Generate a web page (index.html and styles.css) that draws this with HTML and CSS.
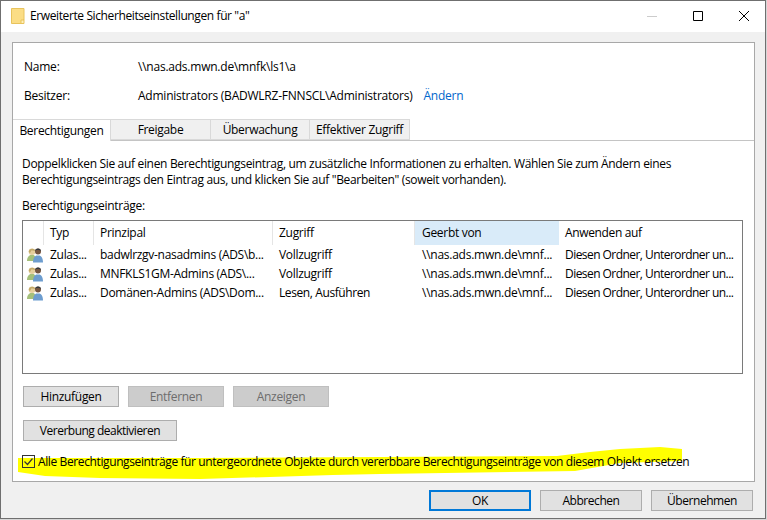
FILE: index.html
```html
<!DOCTYPE html>
<html lang="de">
<head>
<meta charset="utf-8">
<title>Erweiterte Sicherheitseinstellungen für "a"</title>
<link rel="stylesheet" href="styles.css">
</head>
<body>
<div class="window">
  <div class="titlebar">
    <svg class="folder" width="14" height="16" viewBox="0 0 14 16"><path d="M.5.5h12.500v11.500h-1v3.500H.5z" fill="#fbdd85" stroke="#e8c35c"/><path d="M10 12h3v3.500h-3z" fill="#fff0b8" stroke="#e8c35c"/></svg>
    <span class="title">Erweiterte Sicherheitseinstellungen für "a"</span>
    <div class="controls">
      <span class="ctl"><svg width="10" height="10" viewBox="0 0 10 10"><path d="M0 5.500h10" stroke="#ccc"/></svg></span>
      <span class="ctl"><svg width="10" height="10" viewBox="0 0 10 10"><path d="M.5.5h9v9h-9z" fill="none" stroke="#000"/></svg></span>
      <span class="ctl"><svg width="10" height="10" viewBox="0 0 10 10"><path d="M0 0l10 10M10 0L0 10" stroke="#000"/></svg></span>
    </div>
  </div>
  <div class="content">
    <div class="panel">
      <div class="info">
        <div class="info-row"><span class="info-label">Name:</span><span>\\nas.ads.mwn.de\mnfk\ls1\a</span></div>
        <div class="info-row"><span class="info-label">Besitzer:</span><span>Administrators (BADWLRZ-FNNSCL\Administrators)</span><a class="link">Ändern</a></div>
      </div>
      <div class="tabs">
        <div class="tab tab-active">Berechtigungen</div>
        <div class="tab tab-2">Freigabe</div>
        <div class="tab tab-3">Überwachung</div>
        <div class="tab tab-4">Effektiver Zugriff</div>
      </div>
      <div class="page">
        <p class="desc">Doppelklicken Sie auf einen Berechtigungseintrag, um zusätzliche Informationen zu erhalten. Wählen Sie zum Ändern eines<br>Berechtigungseintrags den Eintrag aus, und klicken Sie auf "Bearbeiten" (soweit vorhanden).</p>
        <div class="list-label">Berechtigungseinträge:</div>
        <div class="list">
          <div class="grid head">
            <div class="hc"></div>
            <div class="hc">Typ</div>
            <div class="hc">Prinzipal</div>
            <div class="hc">Zugriff</div>
            <div class="hc hc-hot">Geerbt von</div>
            <div class="hc hc-last">Anwenden auf</div>
          </div>
          <div class="grid row">
            <div class="ic"><svg width="16" height="16" viewBox="0 0 16 16"><use href="#users"/></svg></div>
            <div class="c">Zulas...</div><div class="c">badwlrzgv-nasadmins (ADS\b...</div><div class="c">Vollzugriff</div><div class="c c-from">\\nas.ads.mwn.de\mnf...</div><div class="c c-apply">Diesen Ordner, Unterordner un...</div>
          </div>
          <div class="grid row">
            <div class="ic"><svg width="16" height="16" viewBox="0 0 16 16"><use href="#users"/></svg></div>
            <div class="c">Zulas...</div><div class="c">MNFKLS1GM-Admins (ADS\...</div><div class="c">Vollzugriff</div><div class="c c-from">\\nas.ads.mwn.de\mnf...</div><div class="c c-apply">Diesen Ordner, Unterordner un...</div>
          </div>
          <div class="grid row">
            <div class="ic"><svg width="16" height="16" viewBox="0 0 16 16"><use href="#users"/></svg></div>
            <div class="c">Zulas...</div><div class="c">Domänen-Admins (ADS\Dom...</div><div class="c c-read">Lesen, Ausführen</div><div class="c c-from">\\nas.ads.mwn.de\mnf...</div><div class="c c-apply">Diesen Ordner, Unterordner un...</div>
          </div>
        </div>
        <div class="btn-row">
          <div class="btn btn-list">Hinzufügen</div>
          <div class="btn btn-list btn-off">Entfernen</div>
          <div class="btn btn-list btn-off">Anzeigen</div>
        </div>
        <div class="btn-row2"><div class="btn btn-inherit">Vererbung deaktivieren</div></div>
        <div class="check-row">
          <svg class="marker" width="670" height="40" viewBox="0 0 670 40"><path d="M0 15L182 15L362 14L539 13L572 9L602 6L642 4L664 6L664 18L602 20L557 28L362 31L315 32L182 36L82 35L27 33L0 29z" fill="#ffff00"/></svg>
          <span class="box"><svg width="11" height="11" viewBox="0 0 11 11"><path d="M1.500 5.500l3 3 5-6" fill="none" stroke="#333" stroke-width="1.200"/></svg></span>
          <span class="check-label">Alle Berechtigungseinträge für untergeordnete Objekte durch vererbbare Berechtigungseinträge von diesem Objekt ersetzen</span>
        </div>
      </div>
    </div>
    <div class="footer">
      <div class="btn btn-foot btn-default">OK</div>
      <div class="btn btn-foot btn-tight">Abbrechen</div>
      <div class="btn btn-foot btn-tight">Übernehmen</div>
    </div>
  </div>
</div>
<svg class="defs" width="0" height="0"><defs><g id="users">
  <path d="M0 14c0-3.500 2-6 4-6h2c2 0 3 2.500 3 6z" fill="#a5c07a"/>
  <circle cx="5" cy="4.800" r="3.300" fill="#e6cf9c"/>
  <path d="M1.700 5c0-4 6-4.500 6.600-1L4.500 3.300 3 6z" fill="#c2a868"/>
  <path d="M6 15.500c0-4.500 2-7 4-7h2c2 0 4 2.500 4 7z" fill="#6d9dcf"/>
  <circle cx="11" cy="4.500" r="3" fill="#75553f"/>
  <path d="M8 4c0-3.500 6-3.500 6 0L12 3H9.500z" fill="#33383f"/>
</g></defs></svg>
</body>
</html>
```
FILE: styles.css
```css
* { box-sizing: border-box; }
html, body { margin: 0; padding: 0; }
body {
  width: 767px;
  height: 520px;
  overflow: hidden;
  background: #d6d6d6;
  font-family: "Open Sans", "Noto Sans", sans-serif;
  font-size: 12px;
  letter-spacing: -0.3px;
  color: #000;
}
.window {
  width: 766px;
  height: 519px;
  border: 1px solid #6f6f6f;
  background: #f0f0f0;
  display: flex;
  flex-direction: column;
}
.titlebar {
  height: 31px;
  background: #fff;
  display: flex;
  align-items: center;
  padding: 0 0 2px 10px;
  flex: none;
}
.folder { flex: none; }
.title { margin-left: 5px; letter-spacing: -0.39px; }
.controls { margin: 0 -2px 0 auto; display: flex; }
.ctl { width: 46px; height: 28px; display: flex; align-items: center; justify-content: center; }
.content { flex: 1; padding: 10px 10px 0 11px; display: flex; flex-direction: column; }
.panel {
  height: 440px;
  width: 743px;
  background: #fff;
  border: 1px solid #a8a8a8;
  display: flex;
  flex-direction: column;
  flex: none;
}
.info { padding: 9px 0 0 11px; height: 76px; letter-spacing: -0.23px; flex: none; }
.info-row { display: flex; height: 29px; align-items: center; }
.info-label { width: 114px; }
.link { color: #0066cc; margin-left: 11px; }
.tabs { display: flex; height: 22px; border-bottom: 1px solid #c4c4c4; flex: none; }
.tab {
  height: 21px;
  background: #f0f0f0;
  border: 1px solid #d9d9d9;
  border-left: 0;
  display: flex;
  align-items: center;
  justify-content: center;
}
.tab-active { width: 98px; background: #fff; height: 22px; border-bottom: 0; }
.tab-2 { width: 100px; }
.tab-3 { width: 99px; }
.tab-4 { width: 100px; }
.page { padding: 15px 0 0 9px; flex: 1; }
.desc { margin: 0; line-height: 16px; letter-spacing: -0.325px; }
.list-label { margin-top: 10px; line-height: 16px; }
.list {
  margin-top: 6px;
  width: 721px;
  height: 154px;
  border: 1px solid #7a7a7a;
  background: #fff;
}
.grid { display: grid; grid-template-columns: 21px 50px 179px 142px 144px 1fr; }
.head { height: 24px; }
.hc { display: flex; align-items: center; padding: 0 0 1px 6px; border-right: 1px solid #e5e5e5; }
.hc-hot { background: #d9ebf9; border-right: 0; padding-left: 7px; }
.hc-last { border-right: 0; letter-spacing: -0.36px; }
.row { height: 19px; }
.ic { display: flex; align-items: center; padding-left: 4px; }
.c { padding: 1px 0 0 6px; line-height: 18px; white-space: nowrap; overflow: hidden; }
.c-from { padding-left: 7px; letter-spacing: -0.25px; }
.c-apply { letter-spacing: -0.55px; }
.c-read { letter-spacing: -0.4px; }
.btn {
  background: #e1e1e1;
  border: 1px solid #adadad;
  display: flex;
  align-items: center;
  justify-content: center;
  height: 21px;
}
.btn-row { display: flex; margin: 12px 0 0 1px; gap: 9px; }
.btn-list { width: 96px; }
.btn-off { background: #cccccc; border-color: #bfbfbf; color: #6d6d6d; }
.btn-row2 { margin: 13px 0 0 1px; }
.btn-inherit { width: 154px; letter-spacing: -0.5px; }
.check-row { position: relative; display: flex; align-items: center; margin-top: 12px; height: 16px; }
.marker { position: absolute; left: -4px; top: -10px; }
.box {
  position: relative;
  width: 13px;
  height: 13px;
  border: 1px solid #333;
  display: flex;
  align-items: center;
  justify-content: center;
  flex: none;
}
.check-label { position: relative; margin-left: 3px; white-space: nowrap; letter-spacing: -0.385px; }
.footer { display: flex; justify-content: flex-end; gap: 9px; padding: 8px 2px 0 0; }
.btn-foot { width: 102px; }
.btn-tight { letter-spacing: -0.45px; }
.btn-default { border: 2px solid #0078d7; }
.defs { position: absolute; }
```
